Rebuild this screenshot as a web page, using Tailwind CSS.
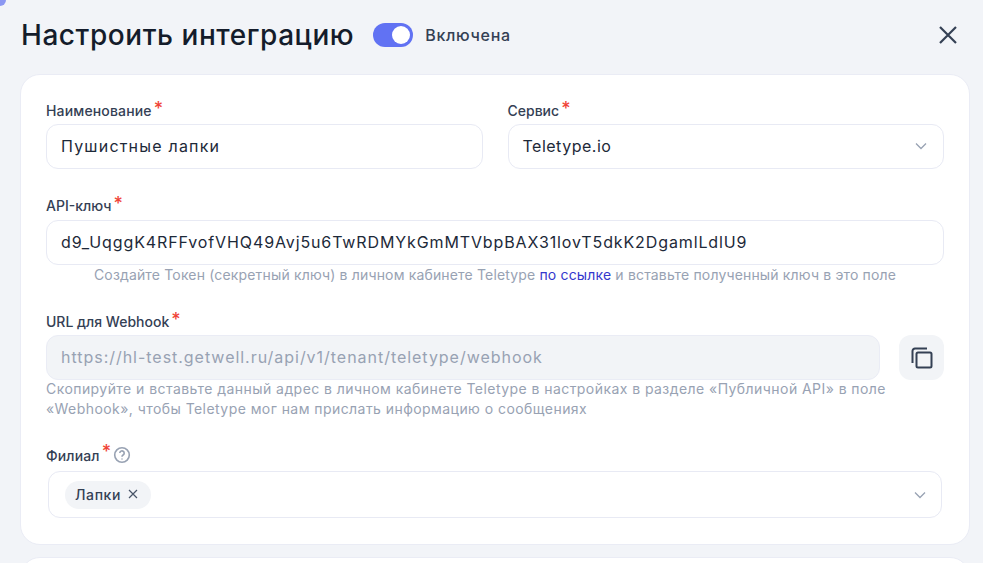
<!DOCTYPE html>
<html><head><meta charset="utf-8"><script src="https://cdn.jsdelivr.net/npm/@tailwindcss/browser@4"></script></head>
<body class="m-0">
<div class="relative w-[983px] h-[563px] overflow-hidden bg-[#f2f4f8] font-['Inter',sans-serif]">
  <div class="absolute -left-[6px] -top-[6px] w-[12px] h-[12px] rounded-full bg-[#5f6ff0]/70"></div>
  <header class="flex items-center h-[70px] mb-[4px] pl-[21px] pr-[25px]">
    <h1 class="m-0 text-[28px] font-medium tracking-[0.55px] text-[#141c2b]">Настроить интеграцию</h1>
    <div class="ml-[19px] w-[40px] h-[24px] rounded-full bg-[#6172f3] flex items-center justify-end pr-[3px]"><div class="w-[18px] h-[18px] rounded-full bg-white"></div></div>
    <span class="ml-[12px] text-[16px] font-medium tracking-[0.7px] text-[#344054]">Включена</span>
    <svg class="ml-auto" width="20" height="20" viewBox="0 0 20 20" fill="none" stroke="#344054" stroke-width="2.2"><path d="M2 2 18 18M18 2 2 18"/></svg>
  </header>
  <main class="ml-[20px] w-[950px] h-[471px] rounded-[20px] border border-[#eaecf5] bg-white px-[25px] pt-[25px]">
    <div class="flex gap-[25px]">
      <div class="w-[437px]">
        <label class="flex h-[24px] text-[14px] font-medium tracking-[0.15px] text-[#344054]">Наименование<span class="ml-[2px] text-[18px] leading-[18px] text-[#f04438]">*</span></label>
        <div class="flex items-center h-[45px] px-[14px] pb-[1px] border border-[#e8eaf4] rounded-[12px] text-[16px] tracking-[1.2px] text-[#1d2939]">Пушистные лапки</div>
      </div>
      <div class="w-[437px]">
        <label class="flex h-[24px] text-[14px] font-medium text-[#344054]">Сервис<span class="ml-[2px] text-[18px] leading-[18px] text-[#f04438]">*</span></label>
        <div class="flex items-center justify-between h-[45px] pl-[14px] pr-[16px] pb-[1px] border border-[#e8eaf4] rounded-[12px] text-[16px] tracking-[0.5px] text-[#1d2939]">Teletype.io
          <svg width="12" height="8" viewBox="0 0 12 8" fill="none" stroke="#98a2b3" stroke-width="1.3"><path d="M1 1.5 6 6.5 11 1.5"/></svg></div>
      </div>
    </div>
    <label class="flex h-[25px] pt-[1px] mt-[25px] box-content text-[14px] font-medium text-[#344054]">API-ключ<span class="ml-[2px] text-[18px] leading-[18px] text-[#f04438]">*</span></label>
    <div class="flex items-center h-[45px] px-[14px] pb-[2px] border border-[#e8eaf4] rounded-[12px] text-[16px] tracking-[0.88px] text-[#1d2939]">d9_UqggK4RFFvofVHQ49Avj5u6TwRDMYkGmMTVbpBAX31lovT5dkK2DgamlLdlU9</div>
    <p class="m-0 text-center text-[14px] leading-[20px] tracking-[0.16px] text-[#98a2b3]">Создайте Токен (секретный ключ) в личном кабинете Teletype <a class="text-[#3538cd]">по ссылке</a> и вставьте полученный ключ в это поле</p>
    <label class="flex h-[24px] pt-[1px] mt-[25px] box-content text-[14px] font-medium text-[#344054]">URL для Webhook<span class="ml-[2px] text-[18px] leading-[18px] text-[#f04438]">*</span></label>
    <div class="flex gap-[19px]">
      <div class="flex-1 flex items-center h-[45px] px-[14px] pb-[1px] border border-[#eaecf5] bg-[#f2f4f7] rounded-[12px] text-[16px] tracking-[0.97px] text-[#98a2b3]">https://hl-test.getwell.ru/api/v1/tenant/teletype/webhook</div>
      <button class="w-[45px] h-[45px] rounded-[12px] bg-[#f2f4f7] flex items-center justify-center">
        <svg width="24" height="24" viewBox="0 0 24 24" fill="none" stroke="#344054" stroke-width="2"><rect x="6.5" y="6.5" width="15" height="15" rx="1.5"/><path d="M2.5 17V5a2.5 2.5 0 0 1 2.5-2.5h12"/></svg>
      </button>
    </div>
    <p class="m-0 text-[14px] leading-[20px] -mt-[1px] tracking-[0.44px] text-[#98a2b3]">Скопируйте и вставьте данный адрес в личном кабинете Teletype в настройках в разделе «Публичной API» в поле<br>«Webhook», чтобы Teletype мог нам прислать информацию о сообщениях</p>
    <label class="flex items-center h-[24px] mt-[24px] text-[14px] font-medium tracking-[0.15px] text-[#344054]">Филиал<span class="ml-[2px] text-[18px] leading-[18px] text-[#f04438] self-start">*</span>
      <svg class="ml-[2px]" width="18" height="18" viewBox="0 0 18 18" fill="none" stroke="#98a2b3" stroke-width="1.6"><circle cx="9" cy="9" r="7.3"/><path d="M6.8 7a2.2 2.2 0 1 1 3.3 2c-.8.5-1.1.9-1.1 1.7"/><path d="M9 12.6v.8"/></svg></label>
    <div class="flex items-center justify-between h-[47px] mx-[2px] mt-[4px] pl-[16px] pr-[15px] border border-[#e8eaf4] rounded-[12px]">
      <span class="flex items-center gap-[7px] h-[28px] pl-[10px] pr-[13px] pb-[1px] rounded-full bg-[#f2f4f7] text-[14px] font-medium tracking-[0.6px] text-[#344054]">Лапки
        <svg width="10" height="10" viewBox="0 0 10 10" fill="none" stroke="#475467" stroke-width="1.2"><path d="M1 1 9 9M9 1 1 9"/></svg></span>
      <svg width="12" height="8" viewBox="0 0 12 8" fill="none" stroke="#98a2b3" stroke-width="1.3"><path d="M1 1.5 6 6.5 11 1.5"/></svg>
    </div>
  </main>
  <div class="ml-[20px] mt-[12px] w-[950px] h-[40px] rounded-[20px] border border-[#eaecf5] bg-white"></div>
</div>
</body></html>
